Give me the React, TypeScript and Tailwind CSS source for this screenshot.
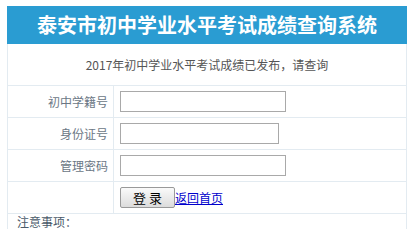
export default function App() {
  const fields = [
    { label: "初中学籍号", width: "w-[166px]" },
    { label: "身份证号", width: "w-[159px]" },
    { label: "管理密码", width: "w-[166px]" },
  ];

  return (
    <div
      className="min-h-screen bg-white pl-[7px] pt-[6px]"
      style={{ fontFamily: '"Noto Sans CJK SC", "Noto Sans", sans-serif' }}
    >
      <div className="w-[400px]">
        {/* Title bar */}
        <div className="flex h-[38px] items-center justify-center bg-[#2a9cd2]">
          <h1 className="text-[20px] font-bold leading-none text-white">泰安市初中学业水平考试成绩查询系统</h1>
        </div>

        {/* Form table */}
        <div className="border-x border-[#e3ebf1]">
          <div className="flex h-[41px] items-center justify-center text-[12px] text-[#555]">
            2017年初中学业水平考试成绩已发布，请查询
          </div>

          {fields.map((f) => (
            <div key={f.label} className="grid h-[32px] grid-cols-[106px_1fr] border-t border-[#e3ebf1]">
              <div className="flex items-center justify-end border-r border-[#e3ebf1] pr-[5px] text-[12px] text-[#6b7785]">
                {f.label}
              </div>
              <div className="flex items-center pl-[6px]">
                <input
                  type={f.label === "管理密码" ? "password" : "text"}
                  className={`${f.width} h-[21px] border border-[#a9a9a9] bg-white outline-none`}
                />
              </div>
            </div>
          ))}

          <div className="grid h-[32px] grid-cols-[106px_1fr] border-t border-[#e3ebf1]">
            <div className="border-r border-[#e3ebf1]" />
            <div className="flex items-center pl-[6px]">
              <button className="h-[21px] w-[55px] rounded-[2px] border border-[#999] bg-gradient-to-b from-[#fafafa] to-[#dcdcdc] text-[13px] leading-none text-black">
                登 录
              </button>
              <a href="#" className="text-[12px] leading-none text-[#0000cc] underline">
                返回首页
              </a>
            </div>
          </div>

          <div className="border-t border-[#e3ebf1] pl-[9px] pt-[1px] text-[12px] leading-[14px] text-[#4a5a6a]">
            注意事项：
          </div>
        </div>
      </div>
    </div>
  );
}
